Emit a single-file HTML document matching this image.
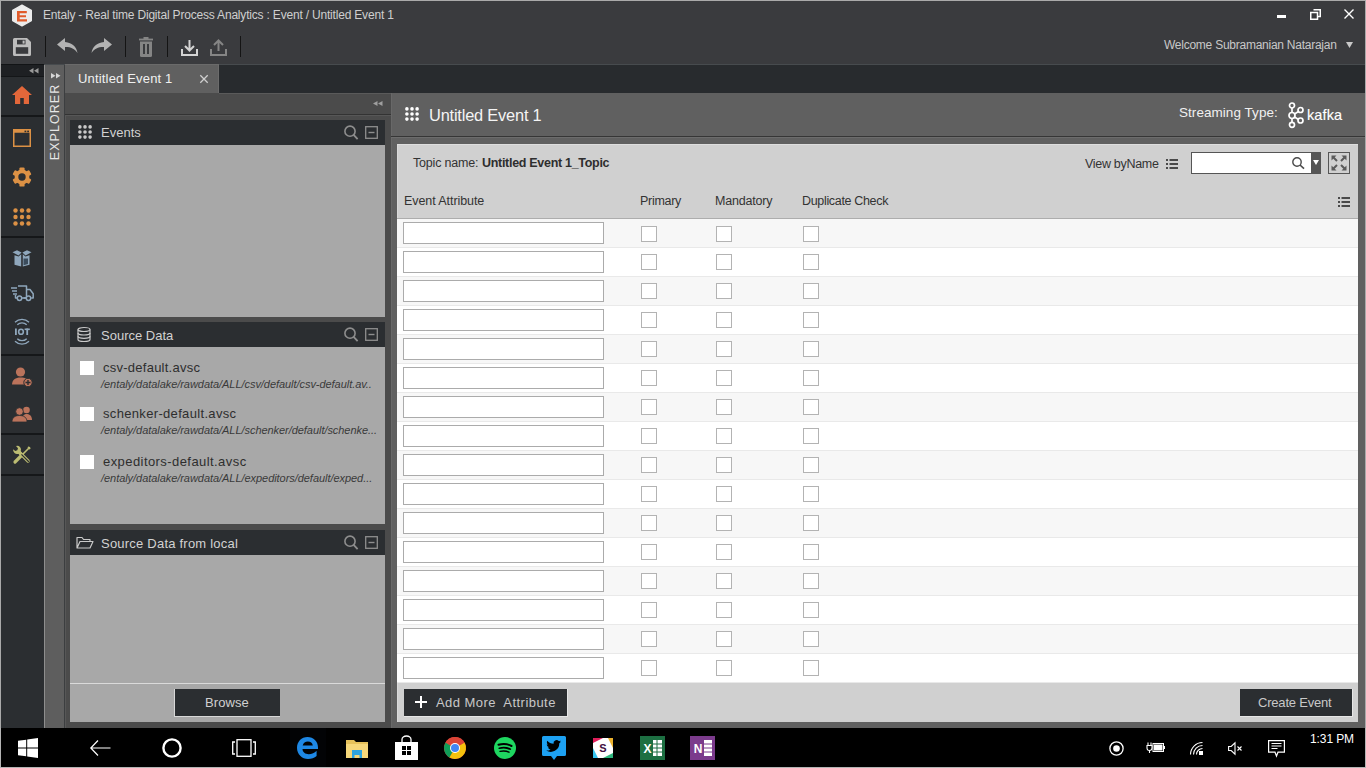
<!DOCTYPE html>
<html><head><meta charset="utf-8">
<style>
*{box-sizing:border-box;margin:0;padding:0}
html,body{width:1366px;height:768px;overflow:hidden;background:#000;font-family:"Liberation Sans",sans-serif}
.a{position:absolute}
.t{position:absolute;white-space:nowrap;line-height:1}
svg{position:absolute;overflow:visible}
.row{position:absolute;left:397px;width:961px;height:29px;border-bottom:1px solid #e9e9e9}
.inp{position:absolute;left:6px;width:201px;height:22px;background:#fff;border:1px solid #ababab}
.cb{position:absolute;width:16px;height:16px;background:#fff;border:1px solid #b3b3b3}
.ph{position:absolute;left:70px;width:315px;height:25px;background:#2b2e31}
.pc{position:absolute;left:70px;width:315px;background:#a8a8a8}
.pt{position:absolute;left:101px;color:#d2d2d2;font-size:13px;white-space:nowrap;line-height:1}
.sn{position:absolute;left:103px;color:#2e2e2e;font-size:13px;white-space:nowrap;line-height:1}
.sp{position:absolute;left:101px;color:#3a3a3a;font-size:11px;font-style:italic;white-space:nowrap;line-height:1;letter-spacing:-0.05px}
.wcb{position:absolute;left:80px;width:14px;height:14px;background:#fff}
</style></head><body>
<!-- window frame -->
<div class="a" style="left:0;top:0;width:1366px;height:728px;background:#aaaaaa"></div>
<!-- title + toolbar -->
<div class="a" style="left:1px;top:1px;width:1364px;height:63px;background:#3a3b3e"></div>
<!-- tab bar -->
<div class="a" style="left:44px;top:64px;width:1321px;height:29px;background:#282b2e"></div>
<!-- left nav -->
<div class="a" style="left:1px;top:64px;width:43px;height:664px;background:#2b2e31"></div>
<div class="a" style="left:1px;top:64px;width:43px;height:13px;background:#1e2023;border-top:1px solid #121416;border-bottom:1px solid #141618"></div>
<!-- explorer strip -->
<div class="a" style="left:44px;top:64px;width:20px;height:664px;background:#5e5e5e;border-left:1px solid #8e8e8e"></div>
<div class="a" style="left:64px;top:64px;width:1px;height:664px;background:#3c3e40"></div>
<!-- tab -->
<div class="a" style="left:44px;top:64px;width:1321px;height:1px;background:#474b4e"></div>
<div class="a" style="left:65px;top:64px;width:154px;height:30px;background:#606060;border-top:1px solid #6a6a6a;border-right:1px solid #6c6c6c"></div>
<!-- explorer panel -->
<div class="a" style="left:65px;top:93px;width:326px;height:635px;background:#4b4b4b"></div>
<div class="a" style="left:219px;top:93px;width:172px;height:1px;background:#5a5a5a"></div>
<div class="a" style="left:65px;top:114px;width:326px;height:1px;background:#333333"></div>
<div class="a" style="left:65px;top:115px;width:326px;height:1px;background:#575757"></div>
<div class="a" style="left:65px;top:115px;width:1px;height:613px;background:#575757"></div>
<!-- main panel -->
<div class="a" style="left:391px;top:93px;width:974px;height:635px;background:#606060"></div>
<div class="a" style="left:391px;top:93px;width:1px;height:635px;background:#686868"></div>
<div class="a" style="left:391px;top:136px;width:974px;height:1px;background:#363636"></div>
<div class="a" style="left:391px;top:137px;width:974px;height:1px;background:#6c6c6c"></div>
<div class="a" style="left:397px;top:144px;width:961px;height:578px;background:#d0d0d0;border-top:1px solid #dedede;border-left:1px solid #dadada"></div>
<!-- TITLEBAR -->
<svg style="left:11px;top:4px" width="22" height="23" viewBox="0 0 22 23">
<polygon points="11,1.2 20.3,6.4 20.3,16.6 11,21.8 1.7,16.6 1.7,6.4" fill="#ececec" stroke="#ececec" stroke-width="1.4" stroke-linejoin="round"/>
<path d="M6 7h9.8v2.2H8.7v2h6.3v2H8.7v2.1h7.3V17.4H6z" fill="#e05b2b"/>
</svg>
<div class="t" style="left:43px;top:9px;font-size:12px;color:#cfcfcf;letter-spacing:-0.19px">Entaly - Real time Digital Process Analytics : Event / Untitled Event 1</div>
<div class="a" style="left:1277px;top:15px;width:9px;height:3px;background:#fff"></div>
<svg style="left:1310px;top:9px" width="11" height="11" viewBox="0 0 11 11">
<path d="M3.5 0.75h6.75v6.75H7.5" fill="none" stroke="#fff" stroke-width="1.5"/>
<rect x="0.75" y="3.5" width="6.75" height="6.75" fill="none" stroke="#fff" stroke-width="1.5"/>
</svg>
<svg style="left:1344px;top:9px" width="10" height="10" viewBox="0 0 10 10">
<path d="M0.5 0.5L9.5 9.5M9.5 0.5L0.5 9.5" stroke="#fff" stroke-width="1.4"/>
</svg>
<!-- TOOLBAR -->
<svg style="left:13px;top:38px" width="18" height="18" viewBox="0 0 18 18">
<path d="M1.5 0h12.5l4 4v12.5a1.5 1.5 0 0 1-1.5 1.5h-15A1.5 1.5 0 0 1 0 16.5v-15A1.5 1.5 0 0 1 1.5 0z" fill="#bdbdbd"/>
<rect x="4" y="1.8" width="8.5" height="4.6" fill="#3a3b3e"/>
<rect x="9.6" y="2.6" width="2" height="3" fill="#bdbdbd"/>
<rect x="2.8" y="9.2" width="12.4" height="6.6" fill="#3a3b3e"/>
</svg>
<div class="a" style="left:45px;top:36px;width:1px;height:21px;background:#141414"></div>
<svg style="left:57px;top:38px" width="21" height="15" viewBox="0 0 21 15">
<path d="M8 0L0 6.5L8 13V9C13.5 8.8 17.5 10.5 20.5 15C19.5 9 15.5 4.6 8 4z" fill="#b3b3b3"/>
</svg>
<svg style="left:91px;top:38px" width="21" height="15" viewBox="0 0 21 15">
<path d="M13 0L21 6.5L13 13V9C7.5 8.8 3.5 10.5 0.5 15C1.5 9 5.5 4.6 13 4z" fill="#b3b3b3"/>
</svg>
<div class="a" style="left:125px;top:36px;width:1px;height:21px;background:#141414"></div>
<svg style="left:139px;top:37px" width="14" height="20" viewBox="0 0 14 20">
<rect x="0" y="1.6" width="14" height="1.8" fill="#858585"/>
<rect x="4.5" y="0" width="5" height="2" fill="#858585"/>
<path d="M1 4.5h12v14a1.5 1.5 0 0 1-1.5 1.5h-9A1.5 1.5 0 0 1 1 18.5z" fill="#858585"/>
<rect x="4" y="7" width="2" height="10" fill="#3a3b3e"/>
<rect x="8" y="7" width="2" height="10" fill="#3a3b3e"/>
</svg>
<div class="a" style="left:167px;top:36px;width:1px;height:21px;background:#141414"></div>
<svg style="left:181px;top:40px" width="17" height="16" viewBox="0 0 17 16">
<path d="M8.5 0v10M4 6l4.5 4.5L13 6" fill="none" stroke="#d4d4d4" stroke-width="2"/>
<path d="M1 9v6h15V9" fill="none" stroke="#d4d4d4" stroke-width="2"/>
</svg>
<svg style="left:210px;top:40px" width="17" height="16" viewBox="0 0 17 16">
<path d="M8.5 11V1M4 5l4.5-4.5L13 5" fill="none" stroke="#858585" stroke-width="2"/>
<path d="M1 9v6h15V9" fill="none" stroke="#858585" stroke-width="2"/>
</svg>
<div class="a" style="left:240px;top:36px;width:1px;height:21px;background:#141414"></div>
<div class="t" style="left:1164px;top:39px;font-size:12px;color:#c8c8c8;letter-spacing:-0.25px">Welcome Subramanian Natarajan</div>
<svg style="left:1346px;top:42px" width="7" height="6" viewBox="0 0 7 6"><path d="M0 0h7L3.5 6z" fill="#c8c8c8"/></svg>
<!-- LEFT NAV -->
<svg style="left:29px;top:68px" width="10" height="6" viewBox="0 0 10 6"><path d="M4.5 0v5.5L0 2.75zM9.5 0v5.5L5 2.75z" fill="#999"/></svg>
<div class="a" style="left:1px;top:115px;width:43px;height:2px;background:#151719"></div>
<div class="a" style="left:1px;top:236px;width:43px;height:2px;background:#151719"></div>
<div class="a" style="left:1px;top:354px;width:43px;height:2px;background:#151719"></div>
<div class="a" style="left:1px;top:433px;width:43px;height:2px;background:#151719"></div>
<div class="a" style="left:1px;top:474px;width:43px;height:2px;background:#151719"></div>
<!-- home -->
<svg style="left:12px;top:86px" width="20" height="18" viewBox="0 0 20 18">
<path d="M10 0L0 9h3v9h5.2v-6h3.6v6H17V9h3z" fill="#e2673a"/>
</svg>
<!-- window -->
<svg style="left:13px;top:129px" width="18" height="18" viewBox="0 0 18 18">
<rect x="0.75" y="0.75" width="16.5" height="16.5" fill="none" stroke="#dc9145" stroke-width="1.5"/>
<rect x="0.75" y="0.75" width="16.5" height="3" fill="#dc9145"/>
<rect x="11.5" y="1.6" width="1.8" height="1.6" fill="#2b2e31"/>
<rect x="14.2" y="1.6" width="1.8" height="1.6" fill="#2b2e31"/>
</svg>
<!-- gear -->
<svg style="left:12px;top:167px" width="20" height="20" viewBox="-10 -10 20 20">
<g fill="#dc9145">
<rect x="-2.6" y="-9.6" width="5.2" height="19.2" rx="1.2"/>
<rect x="-2.6" y="-9.6" width="5.2" height="19.2" rx="1.2" transform="rotate(60)"/>
<rect x="-2.6" y="-9.6" width="5.2" height="19.2" rx="1.2" transform="rotate(120)"/>
<circle r="7.4"/>
</g>
<circle r="3.7" fill="#2b2e31"/>
</svg>
<!-- dots -->
<svg style="left:13px;top:208px" width="18" height="18" viewBox="0 0 18 18">
<g fill="#dc9145"><circle cx="2.5" cy="2.5" r="2.2"/><circle cx="9" cy="2.5" r="2.2"/><circle cx="15.5" cy="2.5" r="2.2"/><circle cx="2.5" cy="9" r="2.2"/><circle cx="9" cy="9" r="2.2"/><circle cx="15.5" cy="9" r="2.2"/><circle cx="2.5" cy="15.5" r="2.2"/><circle cx="9" cy="15.5" r="2.2"/><circle cx="15.5" cy="15.5" r="2.2"/></g>
</svg>
<!-- box -->
<svg style="left:12px;top:250px" width="20" height="17" viewBox="0 0 20 17">
<g fill="#8fa7bc">
<path d="M0.5 2.2L5 0.3L9.6 2.4L6.5 5.6z"/>
<path d="M19.5 2.2L15 0.3L10.4 2.4L13.5 5.6z"/>
<path d="M2.5 5.2L6.6 6.4L9.2 4.2V16.6L2.5 14.8z"/>
<path d="M17.5 5.2L13.4 6.4L10.8 4.2V16.6L17.5 14.8z"/>
</g>
<path d="M11.5 8.5h4.5v5.5l-4.5 1.2z" fill="#3b4c5c"/>
</svg>
<!-- truck -->
<svg style="left:10px;top:285px" width="24" height="17" viewBox="0 0 24 17">
<g fill="none" stroke="#8fa7bc" stroke-width="1.5" stroke-linejoin="round">
<path d="M8 1h8.5v12H5.5v-3"/>
<path d="M16.5 4.5h3.5l3.2 4.2v4.3h-2"/>
<path d="M16.5 13h-3"/>
</g>
<g fill="#2b2e31" stroke="#8fa7bc" stroke-width="1.5"><circle cx="9.5" cy="13.2" r="2.2"/><circle cx="18.5" cy="13.2" r="2.2"/></g>
<g stroke="#8fa7bc" stroke-width="1.4"><path d="M1 3h6M2 6h5M3 9h4"/></g>
</svg>
<!-- IOT -->
<svg style="left:12px;top:320px" width="20" height="24" viewBox="0 0 20 24">
<g fill="none" stroke="#8fa7bc" stroke-width="1.3">
<path d="M5.3 4.8a6.5 6.5 0 0 1 9.4 0"/><path d="M3 2.3a10 10 0 0 1 14 0"/>
<path d="M5.3 18.7a6.5 6.5 0 0 0 9.4 0"/><path d="M3 21.2a10 10 0 0 0 14 0"/>
</g>
<g fill="#8fa7bc">
<rect x="3" y="8.5" width="1.8" height="6.5"/>
<path d="M9 8.4a3.1 3.3 0 1 1 0 6.7a3.1 3.3 0 1 1 0-6.7zM9 9.9a1.5 1.8 0 1 0 0 3.7a1.5 1.8 0 1 0 0-3.7z" fill-rule="evenodd"/>
<rect x="12.6" y="8.5" width="5.2" height="1.6"/><rect x="14.3" y="8.5" width="1.8" height="6.5"/>
</g>
</svg>
<!-- user add -->
<svg style="left:12px;top:367px" width="21" height="20" viewBox="0 0 21 20">
<circle cx="8.5" cy="5" r="4.6" fill="#bb735b"/>
<path d="M0 17.5c0-4.5 3.5-7 8.5-7s7 1.5 8 3.5v3.5z" fill="#bb735b"/>
<circle cx="16" cy="15.5" r="4.2" fill="#bb735b" stroke="#2b2e31" stroke-width="1"/>
<path d="M16 13v5M13.5 15.5h5" stroke="#2b2e31" stroke-width="1.4"/>
</svg>
<!-- users -->
<svg style="left:12px;top:406px" width="21" height="17" viewBox="0 0 21 17">
<circle cx="14.5" cy="4" r="3.3" fill="#bb735b"/>
<path d="M10 14c0-4 2-6 4.5-6s5.5 1.5 5.5 6z" fill="#bb735b"/>
<circle cx="7.5" cy="5.5" r="3.8" fill="#bb735b" stroke="#2b2e31" stroke-width="0.8"/>
<path d="M0 16c0-4.5 3-6.5 7.5-6.5s7.5 2 7.5 6.5z" fill="#bb735b" stroke="#2b2e31" stroke-width="0.8"/>
</svg>
<!-- tools -->
<svg style="left:12px;top:445px" width="20" height="20" viewBox="0 0 20 20">
<g stroke="#bcbc72" stroke-linecap="round" fill="none">
<path d="M17.5 2.5L10.5 9.5" stroke-width="1.6"/>
<path d="M10 10L3 17" stroke-width="3.2"/>
<path d="M7.5 7.5L16 16" stroke-width="3.4"/>
</g>
<path d="M9.2 9.2L16.5 16.5" stroke="#2b2e31" stroke-width="1.2" stroke-linecap="round"/>
<path d="M1.2 4.2a4 4 0 0 0 5.3 4.6l1.8 1.8 2.2-2.2-1.8-1.8A4 4 0 0 0 4 1L6 3.2 5.3 5.3 3.2 6z" fill="#bcbc72"/>
<path d="M16.2 1.2l2.6 2.6-1.6 0.6-1.6-1.6z" fill="#bcbc72"/>
</svg>
<!-- EXPLORER strip -->
<svg style="left:51px;top:73px" width="10" height="6" viewBox="0 0 10 6"><path d="M0 0v5.5L4.5 2.75zM5 0v5.5L9.5 2.75z" fill="#d6d6d6"/></svg>
<div class="t" style="left:55px;top:122px;transform:translate(-50%,-50%) rotate(-90deg);font-size:12.5px;color:#e6e6e6;letter-spacing:1.05px">EXPLORER</div>
<!-- TAB -->
<div class="t" style="left:78px;top:72px;font-size:13px;color:#f0f0f0;letter-spacing:0.17px">Untitled Event 1</div>
<svg style="left:200px;top:75px" width="8" height="8" viewBox="0 0 8 8"><path d="M0.3 0.3L7.7 7.7M7.7 0.3L0.3 7.7" stroke="#cfcfcf" stroke-width="1.3"/></svg>
<svg style="left:373px;top:101px" width="10" height="5" viewBox="0 0 10 5"><path d="M4.5 0v5L0 2.5zM9.5 0v5L5 2.5z" fill="#9f9f9f"/></svg>
<!-- EXPLORER PANEL -->
<div class="ph" style="top:120px"></div>
<div class="pc" style="top:145px;height:172px"></div>
<div class="ph" style="top:322px;height:25px"></div>
<div class="pc" style="top:347px;height:177px"></div>
<div class="ph" style="top:530px"></div>
<div class="pc" style="top:555px;height:167px"></div>
<div class="a" style="left:70px;top:683px;width:315px;height:1px;background:#dadada"></div>
<!-- Events header -->
<svg style="left:78px;top:125px" width="14" height="14" viewBox="0 0 14 14">
<g fill="#c9c9c9"><circle cx="1.9" cy="1.9" r="1.8"/><circle cx="7" cy="1.9" r="1.8"/><circle cx="12.1" cy="1.9" r="1.8"/><circle cx="1.9" cy="7" r="1.8"/><circle cx="7" cy="7" r="1.8"/><circle cx="12.1" cy="7" r="1.8"/><circle cx="1.9" cy="12.1" r="1.8"/><circle cx="7" cy="12.1" r="1.8"/><circle cx="12.1" cy="12.1" r="1.8"/></g>
</svg>
<div class="pt" style="top:126px">Events</div>
<!-- Source data header -->
<svg style="left:77px;top:327px" width="14" height="15" viewBox="0 0 14 15">
<g fill="none" stroke="#c9c9c9" stroke-width="1.2">
<ellipse cx="7" cy="2.5" rx="6" ry="2"/>
<path d="M1 2.5v10c0 1.1 2.7 2 6 2s6-0.9 6-2v-10"/>
<path d="M1 6c0 1.1 2.7 2 6 2s6-0.9 6-2"/><path d="M1 9.3c0 1.1 2.7 2 6 2s6-0.9 6-2"/>
</g>
</svg>
<div class="pt" style="top:329px">Source Data</div>
<!-- local header -->
<svg style="left:76px;top:536px" width="18" height="13" viewBox="0 0 18 13">
<path d="M1 12V1.5h5l1.5 2H14v2.5M1 12l3-6.5h13L14 12z" fill="none" stroke="#c9c9c9" stroke-width="1.2" stroke-linejoin="round"/>
</svg>
<div class="pt" style="top:537px;letter-spacing:0.22px">Source Data from local</div>
<!-- header icons -->
<svg style="left:343px;top:125px" width="36" height="16" viewBox="0 0 36 16">
<circle cx="7" cy="6.2" r="5.1" fill="none" stroke="#8e8e8e" stroke-width="1.6"/>
<path d="M10.6 9.8L14.6 14.2" stroke="#8e8e8e" stroke-width="1.8"/>
<rect x="22.7" y="1.7" width="11.6" height="11.6" fill="none" stroke="#8e8e8e" stroke-width="1.3"/>
<path d="M25.5 7.5h6" stroke="#8e8e8e" stroke-width="1.4"/>
</svg>
<svg style="left:343px;top:327px" width="36" height="16" viewBox="0 0 36 16">
<circle cx="7" cy="6.2" r="5.1" fill="none" stroke="#8e8e8e" stroke-width="1.6"/>
<path d="M10.6 9.8L14.6 14.2" stroke="#8e8e8e" stroke-width="1.8"/>
<rect x="22.7" y="1.7" width="11.6" height="11.6" fill="none" stroke="#8e8e8e" stroke-width="1.3"/>
<path d="M25.5 7.5h6" stroke="#8e8e8e" stroke-width="1.4"/>
</svg>
<svg style="left:343px;top:535px" width="36" height="16" viewBox="0 0 36 16">
<circle cx="7" cy="6.2" r="5.1" fill="none" stroke="#8e8e8e" stroke-width="1.6"/>
<path d="M10.6 9.8L14.6 14.2" stroke="#8e8e8e" stroke-width="1.8"/>
<rect x="22.7" y="1.7" width="11.6" height="11.6" fill="none" stroke="#8e8e8e" stroke-width="1.3"/>
<path d="M25.5 7.5h6" stroke="#8e8e8e" stroke-width="1.4"/>
</svg>
<!-- source items -->
<div class="wcb" style="top:361px"></div>
<div class="sn" style="top:361px;letter-spacing:0.25px">csv-default.avsc</div>
<div class="sp" style="top:379px">/entaly/datalake/rawdata/ALL/csv/default/csv-default.av..</div>
<div class="wcb" style="top:407px"></div>
<div class="sn" style="top:407px;letter-spacing:0.33px">schenker-default.avsc</div>
<div class="sp" style="top:425px">/entaly/datalake/rawdata/ALL/schenker/default/schenke...</div>
<div class="wcb" style="top:455px"></div>
<div class="sn" style="top:455px;letter-spacing:0.43px">expeditors-default.avsc</div>
<div class="sp" style="top:473px">/entaly/datalake/rawdata/ALL/expeditors/default/exped...</div>
<!-- browse -->
<div class="a" style="left:174px;top:689px;width:106px;height:28px;background:#2b2e31;border-left:1px solid #d8d8d8;border-bottom:1px solid #d8d8d8"></div>
<div class="t" style="left:205px;top:696px;font-size:13px;color:#d0d0d0;letter-spacing:0.1px">Browse</div>
<!-- MAIN HEADER -->
<svg style="left:405px;top:107px" width="14" height="14" viewBox="0 0 14 14">
<g fill="#fff"><circle cx="1.9" cy="1.9" r="1.8"/><circle cx="7" cy="1.9" r="1.8"/><circle cx="12.1" cy="1.9" r="1.8"/><circle cx="1.9" cy="7" r="1.8"/><circle cx="7" cy="7" r="1.8"/><circle cx="12.1" cy="7" r="1.8"/><circle cx="1.9" cy="12.1" r="1.8"/><circle cx="7" cy="12.1" r="1.8"/><circle cx="12.1" cy="12.1" r="1.8"/></g>
</svg>
<div class="t" style="left:429px;top:107px;font-size:16.4px;color:#f4f4f4;letter-spacing:-0.2px">Untitled Event 1</div>
<div class="t" style="left:1179px;top:106px;font-size:13.5px;color:#f0f0f0;letter-spacing:0.05px">Streaming Type:</div>
<svg style="left:1286px;top:101px" width="18" height="27" viewBox="0 0 18 27">
<g fill="none" stroke="#fff" stroke-width="1.7">
<path d="M6 7v4.5M6 17.5V21M8.5 13L12.5 10.5M8.5 16L12.5 18.5"/>
<circle cx="6" cy="4.5" r="2.5"/><circle cx="6" cy="14.5" r="3"/><circle cx="6" cy="23.8" r="2.5"/>
<circle cx="14.5" cy="9" r="2.5"/><circle cx="14.5" cy="19.5" r="2.5"/>
</g>
</svg>
<div class="t" style="left:1307px;top:108px;font-size:14.5px;color:#fff;letter-spacing:0.1px;-webkit-text-stroke:0.15px #fff">kafka</div>
<!-- TOPIC ROW -->
<div class="t" style="left:413px;top:157px;font-size:12.5px;color:#333;letter-spacing:-0.2px">Topic name:</div>
<div class="t" style="left:482px;top:157px;font-size:12.5px;font-weight:bold;color:#2e2e2e;letter-spacing:-0.3px">Untitled Event 1_Topic</div>
<div class="t" style="left:1085px;top:158px;font-size:12.5px;color:#333;letter-spacing:-0.3px">View byName</div>
<svg style="left:1166px;top:159px" width="12" height="10" viewBox="0 0 12 10">
<g fill="#4a4a4a"><rect x="0" y="0" width="2" height="2"/><rect x="0" y="4" width="2" height="2"/><rect x="0" y="8" width="2" height="2"/><rect x="3.5" y="0" width="8.5" height="2"/><rect x="3.5" y="4" width="8.5" height="2"/><rect x="3.5" y="8" width="8.5" height="2"/></g>
</svg>
<div class="a" style="left:1191px;top:152px;width:130px;height:22px;background:#fff;border:1px solid #555"></div>
<div class="a" style="left:1311px;top:152px;width:10px;height:22px;background:#555"></div>
<svg style="left:1313px;top:160px" width="6" height="5" viewBox="0 0 6 5"><path d="M0 0h6L3 5z" fill="#fff"/></svg>
<svg style="left:1292px;top:157px" width="13" height="12" viewBox="0 0 13 12">
<circle cx="5" cy="5" r="4.2" fill="none" stroke="#4a4a4a" stroke-width="1.4"/>
<path d="M8 8L12 11.6" stroke="#4a4a4a" stroke-width="1.6"/>
</svg>
<svg style="left:1328px;top:152px" width="22" height="22" viewBox="0 0 22 22">
<rect x="0.5" y="0.5" width="21" height="21" fill="none" stroke="#555" stroke-width="1"/>
<g stroke="#5a5a5a" stroke-width="2" fill="none"><path d="M5.5 5.5L9 9M16.5 5.5L13 9M5.5 16.5L9 13M16.5 16.5L13 13"/></g>
<g fill="#5a5a5a"><path d="M3.5 3.5h5l-5 5z"/><path d="M18.5 3.5h-5l5 5z"/><path d="M3.5 18.5h5l-5-5z"/><path d="M18.5 18.5h-5l5-5z"/></g>
</svg>
<!-- COLUMN HEADERS -->
<div class="t" style="left:404px;top:195px;font-size:12.5px;color:#333;letter-spacing:-0.07px">Event Attribute</div>
<div class="t" style="left:640px;top:195px;font-size:12.5px;color:#333;letter-spacing:-0.3px">Primary</div>
<div class="t" style="left:715px;top:195px;font-size:12.5px;color:#333;letter-spacing:-0.2px">Mandatory</div>
<div class="t" style="left:802px;top:195px;font-size:12.5px;color:#333;letter-spacing:-0.33px">Duplicate Check</div>
<svg style="left:1338px;top:197px" width="12" height="11" viewBox="0 0 12 11">
<g fill="#4a4a4a"><rect x="0" y="0" width="2" height="2"/><rect x="0" y="4" width="2" height="2"/><rect x="0" y="8" width="2" height="2"/><rect x="3.5" y="0" width="8.5" height="2"/><rect x="3.5" y="4" width="8.5" height="2"/><rect x="3.5" y="8" width="8.5" height="2"/></g>
</svg>
<div class="a" style="left:397px;top:218px;width:961px;height:1px;background:#adadad"></div>
<div class="row" style="top:219px;background:#f7f7f7"><div class="inp" style="top:3px"></div><div class="cb" style="left:244px;top:7px"></div><div class="cb" style="left:319px;top:7px"></div><div class="cb" style="left:406px;top:7px"></div></div>
<div class="row" style="top:248px;background:#ffffff"><div class="inp" style="top:3px"></div><div class="cb" style="left:244px;top:6px"></div><div class="cb" style="left:319px;top:6px"></div><div class="cb" style="left:406px;top:6px"></div></div>
<div class="row" style="top:277px;background:#f7f7f7"><div class="inp" style="top:3px"></div><div class="cb" style="left:244px;top:6px"></div><div class="cb" style="left:319px;top:6px"></div><div class="cb" style="left:406px;top:6px"></div></div>
<div class="row" style="top:306px;background:#ffffff"><div class="inp" style="top:3px"></div><div class="cb" style="left:244px;top:6px"></div><div class="cb" style="left:319px;top:6px"></div><div class="cb" style="left:406px;top:6px"></div></div>
<div class="row" style="top:335px;background:#f7f7f7"><div class="inp" style="top:3px"></div><div class="cb" style="left:244px;top:6px"></div><div class="cb" style="left:319px;top:6px"></div><div class="cb" style="left:406px;top:6px"></div></div>
<div class="row" style="top:364px;background:#ffffff"><div class="inp" style="top:3px"></div><div class="cb" style="left:244px;top:6px"></div><div class="cb" style="left:319px;top:6px"></div><div class="cb" style="left:406px;top:6px"></div></div>
<div class="row" style="top:393px;background:#f7f7f7"><div class="inp" style="top:3px"></div><div class="cb" style="left:244px;top:6px"></div><div class="cb" style="left:319px;top:6px"></div><div class="cb" style="left:406px;top:6px"></div></div>
<div class="row" style="top:422px;background:#ffffff"><div class="inp" style="top:3px"></div><div class="cb" style="left:244px;top:6px"></div><div class="cb" style="left:319px;top:6px"></div><div class="cb" style="left:406px;top:6px"></div></div>
<div class="row" style="top:451px;background:#f7f7f7"><div class="inp" style="top:3px"></div><div class="cb" style="left:244px;top:6px"></div><div class="cb" style="left:319px;top:6px"></div><div class="cb" style="left:406px;top:6px"></div></div>
<div class="row" style="top:480px;background:#ffffff"><div class="inp" style="top:3px"></div><div class="cb" style="left:244px;top:6px"></div><div class="cb" style="left:319px;top:6px"></div><div class="cb" style="left:406px;top:6px"></div></div>
<div class="row" style="top:509px;background:#f7f7f7"><div class="inp" style="top:3px"></div><div class="cb" style="left:244px;top:6px"></div><div class="cb" style="left:319px;top:6px"></div><div class="cb" style="left:406px;top:6px"></div></div>
<div class="row" style="top:538px;background:#ffffff"><div class="inp" style="top:3px"></div><div class="cb" style="left:244px;top:6px"></div><div class="cb" style="left:319px;top:6px"></div><div class="cb" style="left:406px;top:6px"></div></div>
<div class="row" style="top:567px;background:#f7f7f7"><div class="inp" style="top:3px"></div><div class="cb" style="left:244px;top:6px"></div><div class="cb" style="left:319px;top:6px"></div><div class="cb" style="left:406px;top:6px"></div></div>
<div class="row" style="top:596px;background:#ffffff"><div class="inp" style="top:3px"></div><div class="cb" style="left:244px;top:6px"></div><div class="cb" style="left:319px;top:6px"></div><div class="cb" style="left:406px;top:6px"></div></div>
<div class="row" style="top:625px;background:#f7f7f7"><div class="inp" style="top:3px"></div><div class="cb" style="left:244px;top:6px"></div><div class="cb" style="left:319px;top:6px"></div><div class="cb" style="left:406px;top:6px"></div></div>
<div class="row" style="top:654px;background:#ffffff"><div class="inp" style="top:3px"></div><div class="cb" style="left:244px;top:6px"></div><div class="cb" style="left:319px;top:6px"></div><div class="cb" style="left:406px;top:6px"></div></div>
<!-- FOOTER BUTTONS -->
<div class="a" style="left:404px;top:689px;width:164px;height:28px;background:#2b2e31;border-right:1px solid #e6e6e6;border-bottom:1px solid #e6e6e6"></div>
<svg style="left:415px;top:696px" width="12" height="12" viewBox="0 0 12 12"><path d="M6 0v12M0 6h12" stroke="#fff" stroke-width="2"/></svg>
<div class="t" style="left:436px;top:696px;font-size:13px;color:#c8c8c8;letter-spacing:0.45px">Add More&nbsp; Attribute</div>
<div class="a" style="left:1240px;top:689px;width:113px;height:28px;background:#2b2e31;border-right:1px solid #e6e6e6;border-bottom:1px solid #e6e6e6"></div>
<div class="t" style="left:1258px;top:696px;font-size:13px;color:#c8c8c8;letter-spacing:-0.2px">Create Event</div>
<!-- taskbar -->
<div class="a" style="left:0;top:728px;width:1366px;height:40px;background:#b4b4b4"></div>
<div class="a" style="left:1px;top:728px;width:1364px;height:39px;background:#000"></div>
<svg style="left:18px;top:738px" width="20" height="20" viewBox="0 0 20 20">
<path d="M0 2.8L8.2 1.7V9.4H0zM9.2 1.5L20 0V9.4H9.2zM0 10.4H8.2V18.3L0 17.2zM9.2 10.4H20V20L9.2 18.5z" fill="#fff"/>
</svg>
<svg style="left:90px;top:740px" width="21" height="16" viewBox="0 0 21 16">
<path d="M8 0.5L0.8 8L8 15.5M0.8 8H20.5" fill="none" stroke="#fff" stroke-width="1.2"/>
</svg>
<svg style="left:162px;top:738px" width="20" height="20" viewBox="0 0 20 20"><circle cx="10" cy="10" r="8.6" fill="none" stroke="#fff" stroke-width="2.4"/></svg>
<svg style="left:232px;top:739px" width="24" height="18" viewBox="0 0 24 18">
<g fill="none" stroke="#fff" stroke-width="1.3"><rect x="5" y="0.7" width="14" height="16.6"/><path d="M3 3H0.7V15H3M21 3H23.3V15H21"/></g>
</svg>
<div class="a" style="left:290px;top:728px;width:36px;height:39px;background:#020305"></div>
<!-- edge -->
<svg style="left:297px;top:737px" width="21" height="22" viewBox="0 0 21 22">
<path d="M10.5 0C4.5 0 0 4.6 0 10.8C0 17.5 5 22 11 22c3.5 0 6.5-1.2 8.6-3v-5.2c-2 2.1-4.9 3.4-7.9 3.4c-3.4 0-6-2-6.2-5.2H21v-1.4C21 4.2 16.5 0 10.5 0zM5.7 8.4c0.6-2.5 2.6-4 5.2-4c2.6 0 4.6 1.5 4.9 4z" fill="#1e88e5"/>
</svg>
<!-- folder -->
<svg style="left:346px;top:739px" width="22" height="19" viewBox="0 0 22 19">
<path d="M0 1h8l2 2h12v16H0z" fill="#e6c15a"/>
<rect x="0" y="5" width="22" height="14" fill="#f6d77a"/>
<path d="M6 19v-6h10v6h-2.5v-3h-5v3z" fill="#2fa5e0"/>
<rect x="6" y="11" width="10" height="2.5" fill="#2fa5e0"/>
</svg>
<!-- store -->
<svg style="left:395px;top:736px" width="23" height="24" viewBox="0 0 23 24">
<path d="M7 6V3.5a4.5 3.5 0 0 1 9 0V6" fill="none" stroke="#fff" stroke-width="1.3"/>
<path d="M0 6h23v18H0z" fill="#fff"/>
<g fill="#000"><rect x="7" y="10" width="4" height="4"/><rect x="12" y="10" width="4" height="4"/><rect x="7" y="15" width="4" height="4"/><rect x="12" y="15" width="4" height="4"/></g>
</svg>
<!-- chrome -->
<svg style="left:444px;top:737px" width="22" height="22" viewBox="-11 -11 22 22">
<circle r="11" fill="#db4437"/>
<path d="M0 0L-9.5 -5.5A11 11 0 0 0 -5.5 9.5z" fill="#0f9d58"/>
<path d="M0 0L-5.5 9.5A11 11 0 0 0 9.5 -5.5z" fill="#f4c20d"/>
<path d="M0 0L9.5 -5.5A11 11 0 0 0 -9.5 -5.5z" fill="#db4437"/>
<circle r="5" fill="#fff"/><circle r="4" fill="#4285f4"/>
</svg>
<!-- spotify -->
<svg style="left:494px;top:737px" width="22" height="22" viewBox="0 0 22 22">
<circle cx="11" cy="11" r="11" fill="#1ed760"/>
<g fill="none" stroke="#000" stroke-linecap="round"><path d="M4.5 7.8c4.5-1.4 9-1 13 1.2" stroke-width="2"/><path d="M5.3 11.2c3.8-1.1 7.6-0.8 11 1" stroke-width="1.7"/><path d="M6 14.4c3.2-0.8 6.2-0.6 9 0.8" stroke-width="1.4"/></g>
</svg>
<!-- tweetdeck -->
<svg style="left:542px;top:736px" width="24" height="24" viewBox="0 0 24 24">
<path d="M1.5 0h21A1.5 1.5 0 0 1 24 1.5v17a1.5 1.5 0 0 1-1.5 1.5H15l-3 4-3-4H1.5A1.5 1.5 0 0 1 0 18.5v-17A1.5 1.5 0 0 1 1.5 0z" fill="#1da1f2"/>
<path d="M19 5.5c-0.5 0.3-1.1 0.4-1.7 0.5c0.6-0.4 1-0.9 1.3-1.6c-0.6 0.3-1.2 0.6-1.9 0.7a3 3 0 0 0-5.1 2.7C9 7.7 6.8 6.5 5.3 4.7c-0.8 1.4-0.4 3.1 0.9 4c-0.5 0-0.9-0.1-1.4-0.4c0 1.5 1 2.7 2.4 3c-0.4 0.1-0.9 0.1-1.4 0c0.4 1.2 1.5 2 2.8 2.1A6 6 0 0 1 4.2 14.5A8.5 8.5 0 0 0 17.3 7.3c0.6-0.5 1.2-1.1 1.7-1.8z" fill="#000"/>
</svg>
<!-- slack -->
<svg style="left:592px;top:737px" width="22" height="22" viewBox="0 0 22 22">
<rect x="1" y="1" width="20" height="20" fill="#fff"/>
<path d="M1 1h10L1 6z" fill="#e01e5a"/><path d="M21 1v10L16 1z" fill="#ecb22e"/><path d="M21 21H11l10-5z" fill="#2eb67d"/><path d="M1 21V11l5 10z" fill="#36c5f0"/>
<rect x="6" y="6" width="10" height="10" fill="#fff"/>
<text x="11" y="15" font-family="Liberation Sans" font-weight="bold" font-size="11" fill="#3f0e40" text-anchor="middle">S</text>
</svg>
<!-- excel -->
<svg style="left:640px;top:736px" width="25" height="24" viewBox="0 0 25 24">
<rect x="0" y="0" width="25" height="24" fill="#1d6f42"/>
<rect x="12" y="4" width="10" height="16" fill="#fff"/>
<g stroke="#1d6f42" stroke-width="1"><path d="M12 8h10M12 12h10M12 16h10M17 4v16"/></g>
<rect x="2" y="4" width="11" height="16" fill="#1d6f42"/>
<text x="7.5" y="17" font-family="Liberation Sans" font-weight="bold" font-size="12" fill="#fff" text-anchor="middle">X</text>
</svg>
<!-- onenote -->
<svg style="left:690px;top:736px" width="25" height="24" viewBox="0 0 25 24">
<rect x="0" y="0" width="25" height="24" fill="#7b3b8c"/>
<rect x="13" y="4" width="9" height="16" fill="#fff"/>
<g stroke="#7b3b8c" stroke-width="1"><path d="M13 8h9M13 12h9M13 16h9"/></g>
<rect x="2" y="4" width="12" height="16" fill="#7b3b8c"/>
<text x="8" y="17" font-family="Liberation Sans" font-weight="bold" font-size="12" fill="#fff" text-anchor="middle">N</text>
</svg>
<!-- systray -->
<svg style="left:1109px;top:741px" width="15" height="15" viewBox="0 0 15 15"><circle cx="7.5" cy="7.5" r="6.6" fill="none" stroke="#fff" stroke-width="1.3"/><circle cx="7.5" cy="7.5" r="3.3" fill="#fff"/></svg>
<svg style="left:1147px;top:742px" width="18" height="11" viewBox="0 0 18 11">
<path d="M1 0.5v3M4 0.5v3M0 3.5h5v2.5a2.5 2.5 0 0 1-5 0zM2.5 8v3" fill="none" stroke="#fff" stroke-width="1.1"/>
<rect x="6" y="1.5" width="10.5" height="8" fill="none" stroke="#fff" stroke-width="1"/>
<rect x="7" y="2.5" width="8.5" height="6" fill="#fff"/>
<rect x="16.5" y="4" width="1.5" height="3" fill="#fff"/>
</svg>
<svg style="left:1190px;top:742px" width="14" height="13" viewBox="0 0 14 13">
<g fill="none" stroke="#fff" stroke-width="1.1"><path d="M0.5 12.5A12 12 0 0 1 12.5 0.5"/><path d="M3.5 12.5A9 9 0 0 1 12.5 3.5"/><path d="M6.5 12.5A6 6 0 0 1 12.5 6.5"/></g>
<rect x="9" y="9" width="4" height="4" fill="#fff"/>
</svg>
<svg style="left:1228px;top:742px" width="15" height="13" viewBox="0 0 15 13">
<path d="M0.6 4.5h2.6L7 0.8v11.4L3.2 8.5H0.6z" fill="none" stroke="#fff" stroke-width="1.1"/>
<path d="M9.5 4.5l4 4M13.5 4.5l-4 4" stroke="#fff" stroke-width="1.1"/>
</svg>
<svg style="left:1268px;top:740px" width="17" height="17" viewBox="0 0 17 17">
<path d="M0.6 0.6h15.8v11.6H10l-1.5 3.8-1.5-3.8H0.6z" fill="none" stroke="#fff" stroke-width="1.2"/>
<path d="M3.5 3.5h10M3.5 6h10M3.5 8.5h6" stroke="#fff" stroke-width="1"/>
</svg>
<div class="t" style="left:1310px;top:733px;font-size:12px;color:#fff;letter-spacing:-0.1px">1:31 PM</div>

</body></html>
